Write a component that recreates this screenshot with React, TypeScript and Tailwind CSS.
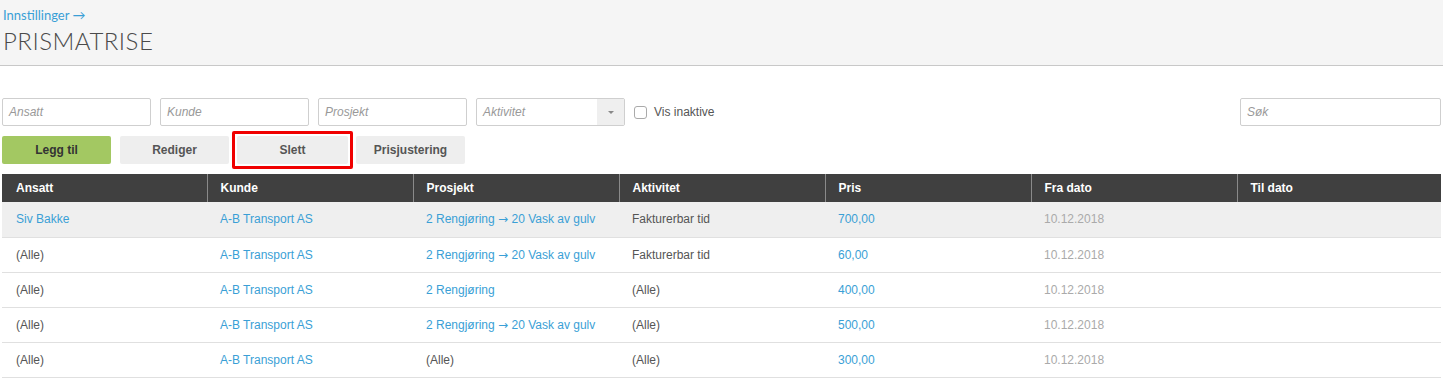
import React from 'react';

const rows = [
  { ansatt: 'Siv Bakke', ansattLink: true, kunde: 'A-B Transport AS', prosjekt: ['2 Rengjøring', '20 Vask av gulv'], prosjektLink: true, aktivitet: 'Fakturerbar tid', pris: '700,00', fra: '10.12.2018', til: '' },
  { ansatt: '(Alle)', ansattLink: false, kunde: 'A-B Transport AS', prosjekt: ['2 Rengjøring', '20 Vask av gulv'], prosjektLink: true, aktivitet: 'Fakturerbar tid', pris: '60,00', fra: '10.12.2018', til: '' },
  { ansatt: '(Alle)', ansattLink: false, kunde: 'A-B Transport AS', prosjekt: ['2 Rengjøring'], prosjektLink: true, aktivitet: '(Alle)', pris: '400,00', fra: '10.12.2018', til: '' },
  { ansatt: '(Alle)', ansattLink: false, kunde: 'A-B Transport AS', prosjekt: ['2 Rengjøring', '20 Vask av gulv'], prosjektLink: true, aktivitet: '(Alle)', pris: '500,00', fra: '10.12.2018', til: '' },
  { ansatt: '(Alle)', ansattLink: false, kunde: 'A-B Transport AS', prosjekt: ['(Alle)'], prosjektLink: false, aktivitet: '(Alle)', pris: '300,00', fra: '10.12.2018', til: '' },
];

const headers = ['Ansatt', 'Kunde', 'Prosjekt', 'Aktivitet', 'Pris', 'Fra dato', 'Til dato'];
const colWidths = [205, 206, 206, 206, 206, 206, 204];

function TextInput({ placeholder, className = '' }: { placeholder: string; className?: string }) {
  return (
    <div className={`h-[28px] border border-[#cfcfcf] bg-white rounded-[2px] flex items-center px-[6px] ${className}`}>
      <span className="italic text-[12px] text-[#999]">{placeholder}</span>
    </div>
  );
}

export default function App() {
  const link = 'text-[#3a9fd6]';
  const plain = 'text-[#555]';
  const cell = (i: number) => (i === 0 ? 'pl-[14px] pr-[12px]' : 'pl-[13px] pr-[12px]');
  return (
    <div className="min-h-screen bg-white text-[12px]" style={{ fontFamily: '"Liberation Sans", Arial, sans-serif' }}>
      {/* topp */}
      <div className="bg-[#f5f5f5] border-b border-[#c8c8c8] h-[66px] px-[3px] pt-[7px]">
        <div className="text-[13px] text-[#3a9fd6] leading-[16px]" style={{ fontFamily: 'Lato, sans-serif' }}>
          Innstillinger →
        </div>
        <h1 className="text-[24px] font-light text-[#4a4a4a] tracking-[0.5px] leading-[30px] mt-[3px]" style={{ fontFamily: 'Lato, sans-serif' }}>
          PRISMATRISE
        </h1>
      </div>

      <div className="px-[2px]">
        {/* filtre */}
        <div className="flex items-center mt-[32px] gap-[9px]">
          <TextInput placeholder="Ansatt" className="w-[149px]" />
          <TextInput placeholder="Kunde" className="w-[149px]" />
          <TextInput placeholder="Prosjekt" className="w-[149px]" />
          <div className="w-[149px] h-[28px] border border-[#cfcfcf] bg-white rounded-[2px] flex">
            <div className="flex-1 flex items-center px-[6px]">
              <span className="italic text-[12px] text-[#999]">Aktivitet</span>
            </div>
            <div className="w-[27px] bg-[#efefef] flex items-center justify-center">
              <span className="block w-0 h-0 border-l-[3px] border-r-[3px] border-t-[3px] border-l-transparent border-r-transparent border-t-[#888]" />
            </div>
          </div>
          <label className="flex items-center gap-[7px]">
            <span className="w-[13px] h-[13px] border border-[#aaa] rounded-[3px] bg-white" />
            <span className="text-[12px] text-[#555]">Vis inaktive</span>
          </label>
          <div className="flex-1" />
          <TextInput placeholder="Søk" className="w-[201px]" />
        </div>

        {/* knapper */}
        <div className="flex items-center mt-[10px] gap-2">
          <button className="w-[109px] h-[28px] bg-[#a3c862] rounded-[2px] font-bold text-[12px] text-[#333]">Legg til</button>
          <button className="ml-[1px] w-[109px] h-[28px] bg-[#eeeeee] rounded-[2px] font-bold text-[12px] text-[#555]">Rediger</button>
          <div className="relative">
            <button className="w-[111px] h-[28px] bg-[#eeeeee] rounded-[2px] font-bold text-[12px] text-[#555]">Slett</button>
            <div className="absolute -inset-[5px] border-[3px] border-[#f00000] rounded-[2px] pointer-events-none" />
          </div>
          <button className="w-[109px] h-[28px] bg-[#eeeeee] rounded-[2px] font-bold text-[12px] text-[#555]">Prisjustering</button>
        </div>

        {/* tabell */}
        <table className="w-[1439px] mt-[10px] border-collapse table-fixed">
          <colgroup>
            {colWidths.map((w, i) => (
              <col key={i} style={{ width: w }} />
            ))}
          </colgroup>
          <thead>
            <tr className="bg-[#404040] h-[28px]">
              {headers.map((h, i) => (
                <th
                  key={h}
                  className={`text-left font-bold text-white text-[12px] ${cell(i)} ${i < headers.length - 1 ? 'border-r border-[#8a8a8a]' : ''}`}
                >
                  {h}
                </th>
              ))}
            </tr>
          </thead>
          <tbody>
            {rows.map((r, i) => (
              <tr key={i} className={`h-[35px] border-b border-[#e0e0e0] ${i === 0 ? 'bg-[#efefef]' : 'bg-white'}`}>
                <td className={`${cell(0)} ${r.ansattLink ? link : plain}`}>{r.ansatt}</td>
                <td className={`${cell(1)} ${link}`}>{r.kunde}</td>
                <td className={`${cell(2)} ${r.prosjektLink ? link : plain}`}>
                  {r.prosjekt[0]}
                  {r.prosjekt[1] && (
                    <>
                      {' '}
                      <span className="text-[12px]" style={{ fontFamily: '"DejaVu Sans", sans-serif' }}>→</span>{' '}
                      {r.prosjekt[1]}
                    </>
                  )}
                </td>
                <td className={`${cell(3)} ${plain}`}>{r.aktivitet}</td>
                <td className={`${cell(4)} ${link}`}>{r.pris}</td>
                <td className={`${cell(5)} text-[#aaaaaa]`}>{r.fra}</td>
                <td className={`${cell(6)} text-[#555]`}>{r.til}</td>
              </tr>
            ))}
          </tbody>
        </table>
      </div>
    </div>
  );
}
